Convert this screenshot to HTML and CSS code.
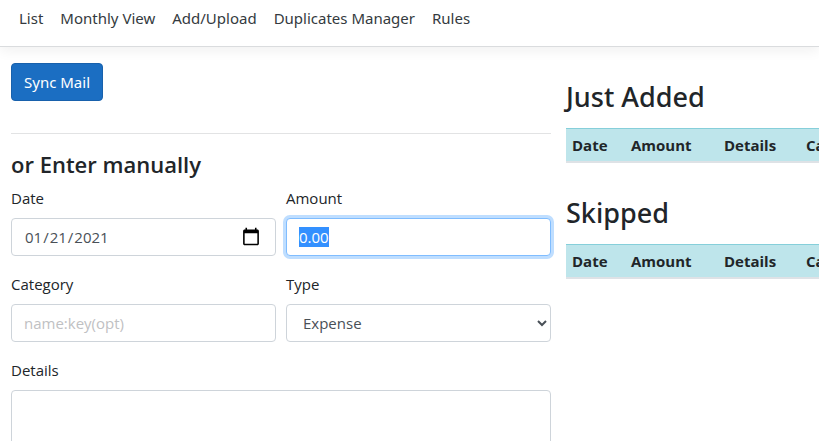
FILE: index.html
```html
<!DOCTYPE html>
<html lang="en">
<head>
<meta charset="utf-8">
<meta name="viewport" content="width=device-width, initial-scale=1">
<title>Add/Upload</title>
<link rel="stylesheet" href="styles.css">
</head>
<body>
<nav class="navbar">
  <a href="#list">List</a>
  <a href="#monthly">Monthly View</a>
  <a href="#add">Add/Upload</a>
  <a href="#duplicates">Duplicates Manager</a>
  <a href="#rules">Rules</a>
</nav>
<main class="layout">
  <section class="entry">
    <button class="btn" type="button">Sync Mail</button>
    <hr class="divider">
    <h2 class="form-title">or Enter manually</h2>
    <form class="form-grid">
      <div class="field">
        <label for="date">Date</label>
        <input class="control" id="date" type="date" value="2021-01-21">
      </div>
      <div class="field">
        <label for="amount">Amount</label>
        <input class="control" id="amount" type="text" inputmode="decimal" value="0.00" autofocus>
      </div>
      <div class="field">
        <label for="category">Category</label>
        <input class="control" id="category" type="text" placeholder="name:key(opt)">
      </div>
      <div class="field">
        <label for="type">Type</label>
        <select class="control" id="type"><option>Expense</option><option>Income</option></select>
      </div>
      <div class="field field-wide">
        <label for="details">Details</label>
        <textarea class="control details" id="details" rows="3"></textarea>
      </div>
    </form>
  </section>
  <section class="results">
    <h1>Just Added</h1>
    <table class="records">
      <thead><tr><th class="col-date">Date</th><th class="col-amount">Amount</th><th class="col-details">Details</th><th class="col-category">Category</th></tr></thead>
    </table>
    <h1>Skipped</h1>
    <table class="records">
      <thead><tr><th class="col-date">Date</th><th class="col-amount">Amount</th><th class="col-details">Details</th><th class="col-category">Category</th></tr></thead>
    </table>
  </section>
</main>
<script src="script.js"></script>
</body>
</html>
```
FILE: script.js
```js
const amount = document.getElementById("amount");
amount.focus();
amount.select();
```
FILE: styles.css
```css
* { box-sizing: border-box; }

body {
  margin: 0;
  overflow: hidden;
  background: #fff;
  color: #212529;
  font: 15px/24px "Open Sans", "Noto Sans", sans-serif;
}

.navbar {
  display: flex;
  gap: 17px;
  padding: 6px 19px 16px;
  border-bottom: 1px solid #dadcde;
  box-shadow: 0 4px 12px rgba(0, 0, 0, 0.06);
}

.navbar a {
  color: #343a40;
  font-family: "Noto Sans", "Open Sans", sans-serif;
  text-decoration: none;
}

.layout {
  display: grid;
  grid-template-columns: minmax(0, 540fr) minmax(0, 253fr);
  column-gap: 15px;
  padding: 16px 0 0 11px;
}

.btn {
  height: 38px;
  padding: 0 12px;
  border: 1px solid #1861ac;
  border-radius: 4px;
  background: #1b6ec2;
  color: #fff;
  font: inherit;
  font-family: "Noto Sans", "Open Sans", sans-serif;
}

.divider {
  margin: 32px 0 16px;
  border: 0;
  border-top: 1px solid #e2e3e4;
}

.form-title {
  margin: 0 0 8px;
  font-size: 22px;
  font-weight: 600;
  line-height: 28px;
}

.form-grid {
  display: grid;
  grid-template-columns: 1fr 1fr;
  gap: 16px 10px;
}

.field { min-width: 0; }

.field-wide { grid-column: 1 / -1; }

.field label {
  display: block;
  margin-bottom: 8px;
}

.control {
  display: block;
  width: 100%;
  height: 38px;
  padding: 6px 12px;
  border: 1px solid #ced4da;
  border-radius: 4px;
  background: #fff;
  color: #495057;
  font: inherit;
}

.control::placeholder { color: #bfc1c3; }

.control::-webkit-calendar-picker-indicator {
  width: 20px;
  height: 20px;
  margin-right: 2px;
  padding: 0;
}

.control:focus {
  border-color: #80bdff;
  outline: 0;
  box-shadow: 0 0 0 3px #bfdeff;
}

.control::selection {
  background: #3390ff;
  color: #fff;
}

.details {
  height: 86px;
  resize: none;
}

.results { padding-top: 17px; }

.results h1 {
  margin: 0 0 14px;
  font-family: "Noto Sans", "Open Sans", sans-serif;
  font-size: 27px;
  font-weight: 500;
  line-height: 34px;
}

.records {
  width: 340px;
  margin-bottom: 33px;
  table-layout: fixed;
  border-collapse: separate;
  border-spacing: 0;
}

.records th {
  height: 35px;
  padding: 0 6px;
  border-top: 1px solid #86cfda;
  border-bottom: 2px solid #dee2e6;
  background: #bee5eb;
  font-weight: 700;
  text-align: left;
}

.col-date { width: 59px; }
.col-amount { width: 93px; }
.col-details { width: 82px; }
```
